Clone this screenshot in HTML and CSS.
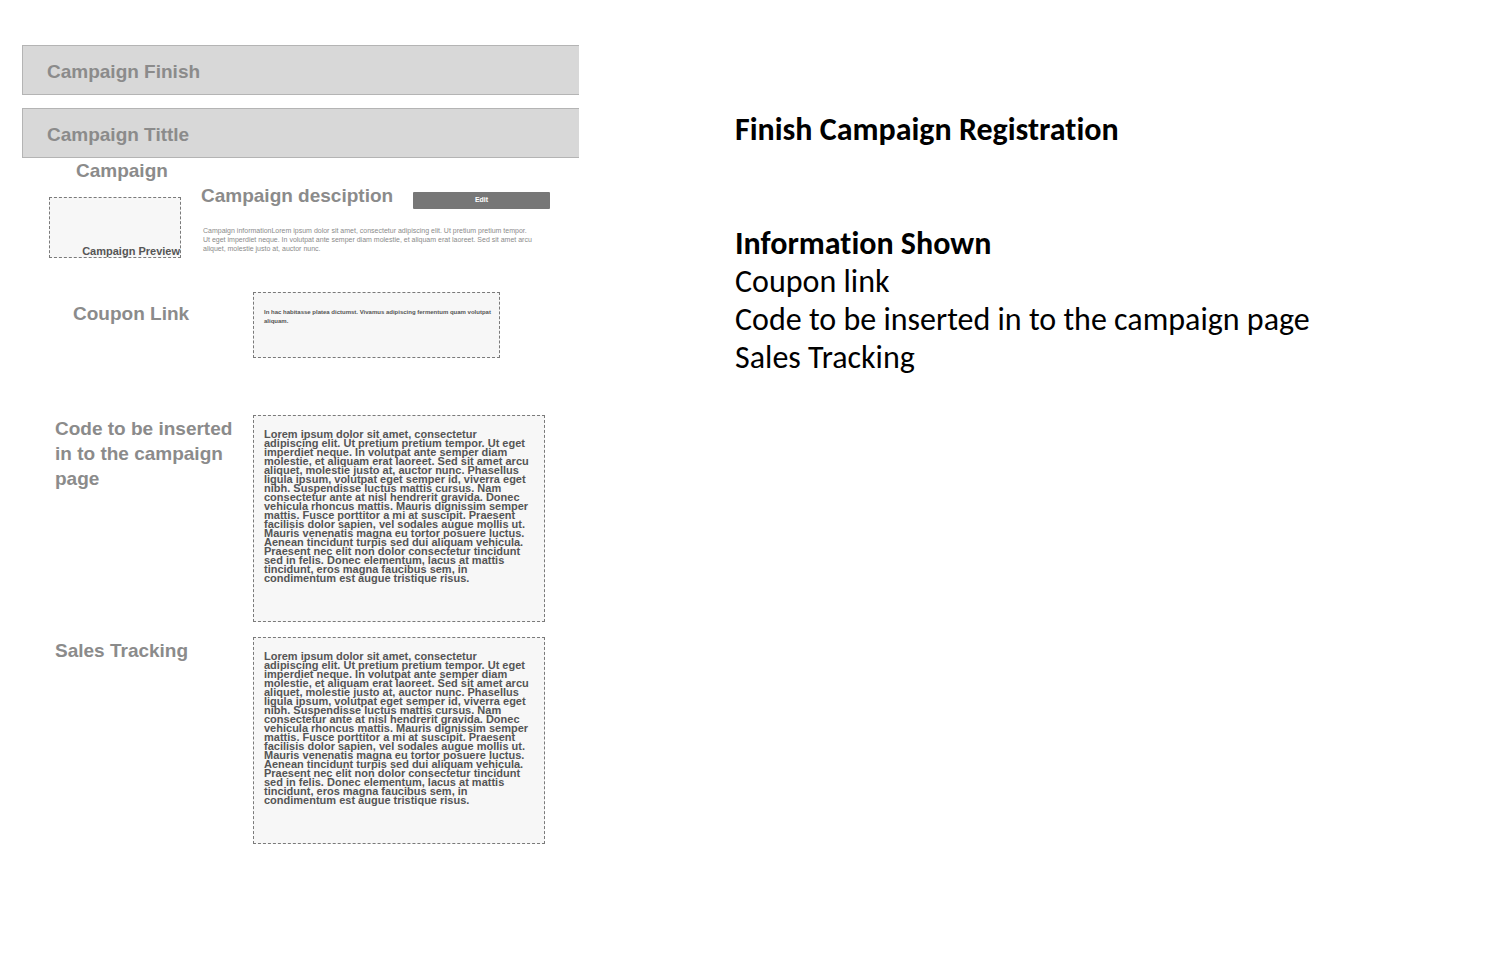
FILE: index.html
```html
<!DOCTYPE html>
<html lang="en">
<head>
    <meta charset="UTF-8">
    <meta name="viewport" content="width=device-width, initial-scale=1.0">
    <title>Campaign Finish</title>
    <link rel="stylesheet" href="styles.css">
</head>
<body>
    <div class="page">
        <!-- wireframe -->
        <main class="wireframe">
            <h1 class="bar">Campaign Finish</h1>
            <h2 class="bar">Campaign Tittle</h2>

            <section class="campaign">
                <div class="campaign-left">
                    <h3 class="campaign-label">Campaign</h3>
                    <div class="box preview">Campaign Preview</div>
                </div>
                <div class="campaign-right">
                    <div class="campaign-head">
                        <h3>Campaign desciption</h3>
                        <button type="button" class="edit-btn">Edit</button>
                    </div>
                    <p class="info">Campaign informationLorem ipsum dolor sit amet, consectetur adipiscing elit. Ut pretium pretium tempor. Ut eget imperdiet neque. In volutpat ante semper diam molestie, et aliquam erat laoreet. Sed sit amet arcu aliquet, molestie justo at, auctor nunc.</p>
                </div>
            </section>

            <section class="row coupon">
                <h3>Coupon Link</h3>
                <p class="box link-box">In hac habitasse platea dictumst. Vivamus adipiscing fermentum quam volutpat aliquam.</p>
            </section>

            <section class="row code">
                <h3>Code to be inserted in to the campaign page</h3>
                <p class="box text-box">Lorem ipsum dolor sit amet, consectetur adipiscing elit. Ut pretium pretium tempor. Ut eget imperdiet neque. In volutpat ante semper diam molestie, et aliquam erat laoreet. Sed sit amet arcu aliquet, molestie justo at, auctor nunc. Phasellus ligula ipsum, volutpat eget semper id, viverra eget nibh. Suspendisse luctus mattis cursus. Nam consectetur ante at nisl hendrerit gravida. Donec vehicula rhoncus mattis. Mauris dignissim semper mattis. Fusce porttitor a mi at suscipit. Praesent facilisis dolor sapien, vel sodales augue mollis ut. Mauris venenatis magna eu tortor posuere luctus. Aenean tincidunt turpis sed dui aliquam vehicula. Praesent nec elit non dolor consectetur tincidunt sed in felis. Donec elementum, lacus at mattis tincidunt, eros magna faucibus sem, in condimentum est augue tristique risus.</p>
            </section>

            <section class="row sales">
                <h3>Sales Tracking</h3>
                <p class="box text-box">Lorem ipsum dolor sit amet, consectetur adipiscing elit. Ut pretium pretium tempor. Ut eget imperdiet neque. In volutpat ante semper diam molestie, et aliquam erat laoreet. Sed sit amet arcu aliquet, molestie justo at, auctor nunc. Phasellus ligula ipsum, volutpat eget semper id, viverra eget nibh. Suspendisse luctus mattis cursus. Nam consectetur ante at nisl hendrerit gravida. Donec vehicula rhoncus mattis. Mauris dignissim semper mattis. Fusce porttitor a mi at suscipit. Praesent facilisis dolor sapien, vel sodales augue mollis ut. Mauris venenatis magna eu tortor posuere luctus. Aenean tincidunt turpis sed dui aliquam vehicula. Praesent nec elit non dolor consectetur tincidunt sed in felis. Donec elementum, lacus at mattis tincidunt, eros magna faucibus sem, in condimentum est augue tristique risus.</p>
            </section>
        </main>

        <!-- notes -->
        <aside class="notes">
            <h2>Finish Campaign Registration</h2>
            <h2>Information Shown</h2>
            <ul>
                <li>Coupon link</li>
                <li>Code to be inserted in to the campaign page</li>
                <li>Sales Tracking</li>
            </ul>
        </aside>
    </div>
</body>
</html>
```
FILE: styles.css
```css
* {
    box-sizing: border-box;
}
body {
    margin: 0;
    background-color: #fff;
    font-family: "Liberation Sans", Arial, sans-serif;
}
h1, h2, h3, p, ul {
    margin: 0;
    padding: 0;
}
.page {
    display: grid;
    grid-template-columns: 579fr 921fr;
}

/* wireframe */
.wireframe {
    padding: 45px 0 40px 22px;
    color: #8b8b8b;
}
.bar, .wireframe h3 {
    font-size: 19px;
    line-height: 25px;
    font-weight: bold;
}
.bar {
    padding: 13px 24px 10px;
    margin-bottom: 13px;
    background-color: #d8d8d8;
    border: 1px solid #b4b4b4;
    border-right: none;
}
.box {
    background-color: #f7f7f7;
    border: 1px dashed #7a7a7a;
    color: #555;
    font-weight: bold;
}
.campaign {
    display: flex;
    gap: 20px;
    padding: 0 29px 0 27px;
}
.campaign-left {
    flex: 0 0 132px;
}
.wireframe .campaign-label {
    margin-top: -13px;
    padding-left: 27px;
}
.preview {
    display: flex;
    align-items: flex-end;
    justify-content: flex-end;
    height: 61px;
    margin-top: 14px;
    font-size: 11px;
    line-height: 11px;
    white-space: nowrap;
}
.campaign-right {
    flex: 1;
    padding-top: 12px;
}
.campaign-head {
    display: flex;
    align-items: flex-start;
    justify-content: space-between;
    gap: 12px;
    white-space: nowrap;
}
.edit-btn {
    flex: 0 0 137px;
    height: 17px;
    margin-top: 9px;
    padding: 0 0 2px;
    border: none;
    border-radius: 1px;
    background-color: #777;
    color: #fff;
    font-family: inherit;
    font-size: 7px;
    font-weight: bold;
    cursor: pointer;
}
.edit-btn:hover {
    background-color: #666;
}
.info {
    padding: 17px 16px 0 2px;
    font-size: 7px;
    line-height: 9px;
}
.row {
    display: grid;
    grid-template-columns: 198px 1fr;
    padding: 0 34px 0 33px;
}
.row h3 {
    padding-top: 1px;
}
.coupon {
    margin-top: 34px;
}
.coupon h3 {
    padding: 9px 0 0 18px;
}
.link-box {
    min-height: 66px;
    margin-right: 45px;
    padding: 15px 4px 14px 10px;
    font-size: 6px;
    line-height: 9px;
}
.code {
    margin-top: 57px;
}
.text-box {
    min-height: 207px;
    padding: 14px 12px 30px 10px;
    font-size: 11px;
    line-height: 9px;
}
.sales {
    margin-top: 15px;
}

/* notes */
.notes {
    padding: 111px 24px 0 156px;
    color: #000;
    font-family: Calibri, Carlito, Lato, sans-serif;
    font-size: 32px;
    font-variant-ligatures: none;
    line-height: 38px;
}
.notes h2 {
    font-size: 32px;
    font-weight: bold;
}
.notes h2 + h2 {
    margin-top: 76px;
}
.notes ul {
    list-style: none;
}
```
